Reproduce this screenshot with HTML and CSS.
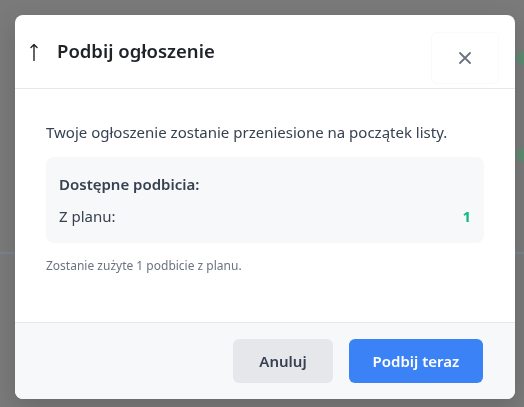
FILE: index.html
```html
<!DOCTYPE html>
<html lang="pl">
<head>
    <meta charset="UTF-8">
    <meta name="viewport" content="width=device-width, initial-scale=1.0">
    <title>Podbij ogłoszenie</title>
    <link rel="stylesheet" href="styles.css">
</head>
<body>
    <!-- Darkened page behind the modal -->
    <div class="backdrop">
        <span class="bg-dot dot-top"></span>
        <span class="bg-dot dot-mid"></span>
        <span class="bg-line"></span>
    </div>

    <div class="overlay">
        <div class="modal">
            <!-- Header -->
            <div class="modal-header">
                <h2 class="modal-title">
                    <span class="title-icon">
                        <svg width="8" height="18" viewBox="0 0 8 18">
                            <path d="M4 1.5 V17.5 M1 4.5 L4 1.5 L7 4.5" fill="none" stroke="#1f2328" stroke-width="1.4" stroke-linecap="round" stroke-linejoin="round"/>
                        </svg>
                    </span>
                    Podbij ogłoszenie
                </h2>
                <button class="close-btn" aria-label="Zamknij">
                    <svg width="12" height="12" viewBox="0 0 12 12">
                        <path d="M1 1 L11 11 M11 1 L1 11" stroke="#6b7280" stroke-width="1.8" stroke-linecap="round"/>
                    </svg>
                </button>
            </div>

            <!-- Body -->
            <div class="modal-body">
                <p class="lead">Twoje ogłoszenie zostanie przeniesione na początek listy.</p>

                <div class="boost-box">
                    <div class="boost-title">Dostępne podbicia:</div>
                    <div class="boost-row">
                        <span>Z planu:</span>
                        <span class="boost-count">1</span>
                    </div>
                </div>

                <p class="note">Zostanie zużyte 1 podbicie z planu.</p>
            </div>

            <!-- Footer -->
            <div class="modal-footer">
                <button class="btn btn-cancel">Anuluj</button>
                <button class="btn btn-primary">Podbij teraz</button>
            </div>
        </div>
    </div>
</body>
</html>
```

FILE: styles.css
```css
body {
    font-family: "Noto Sans", "Open Sans", Arial, sans-serif;
    margin: 0;
    background-color: #7a7a7a;
    height: 100vh;
    overflow: hidden;
}
.backdrop {
    position: fixed;
    inset: 0;
    background-color: #7a7a7a;
}
.bg-dot {
    position: absolute;
    right: -6px;
    width: 14px;
    height: 14px;
    border-radius: 50%;
    background-color: #5f8a72;
}
.dot-top {
    top: 51px;
}
.dot-mid {
    top: 148px;
}
.bg-line {
    position: absolute;
    left: 0;
    right: 0;
    top: 252px;
    height: 2px;
    background-color: #7c8291;
}
.overlay {
    position: relative;
    padding: 15px;
}
.modal {
    width: 500px;
    background-color: #ffffff;
    border-radius: 8px;
    box-shadow: 0 8px 24px rgba(0, 0, 0, 0.15);
    overflow: hidden;
}
.modal-header {
    display: flex;
    justify-content: space-between;
    align-items: flex-start;
    height: 74px;
    padding: 17px 16px 0 15px;
    box-sizing: border-box;
    border-bottom: 1px solid #e5e7eb;
}
.modal-title {
    margin: 5px 0 0;
    font-size: 18.5px;
    line-height: 28px;
    font-weight: 600;
    color: #1f2328;
    display: flex;
    align-items: center;
}
.title-icon {
    display: flex;
    width: 27px;
    padding-top: 1px;
}
.close-btn {
    width: 68px;
    height: 52px;
    border: 1px solid #fafafb;
    border-radius: 6px;
    background-color: #ffffff;
    display: flex;
    justify-content: center;
    align-items: center;
    cursor: pointer;
}
.modal-body {
    padding: 32px 31px 48px;
}
.lead {
    margin: 0 0 14px;
    font-size: 15px;
    line-height: 22px;
    color: #374151;
}
.boost-box {
    background-color: #f7f8fa;
    border-radius: 8px;
    padding: 16px 13px;
    display: flex;
    flex-direction: column;
    gap: 10px;
}
.boost-title {
    font-size: 15px;
    line-height: 22px;
    font-weight: 600;
    color: #374151;
}
.boost-row {
    display: flex;
    justify-content: space-between;
    font-size: 15px;
    line-height: 22px;
    color: #374151;
}
.boost-count {
    font-weight: 700;
    color: #10b981;
}
.note {
    margin: 15px 0 0;
    font-size: 12px;
    line-height: 16px;
    color: #6b7280;
}
.modal-footer {
    display: flex;
    justify-content: flex-end;
    gap: 16px;
    padding: 16px 32px;
    background-color: #f7f8fa;
    border-top: 1px solid #e5e7eb;
}
.btn {
    height: 44px;
    padding: 0;
    border: none;
    border-radius: 6px;
    font-family: inherit;
    font-size: 15px;
    font-weight: 600;
    white-space: nowrap;
    cursor: pointer;
}
.btn-cancel {
    width: 100px;
    background-color: #e5e7eb;
    color: #374151;
}
.btn-primary {
    width: 134px;
    background-color: #3b82f6;
    color: #ffffff;
}
```
